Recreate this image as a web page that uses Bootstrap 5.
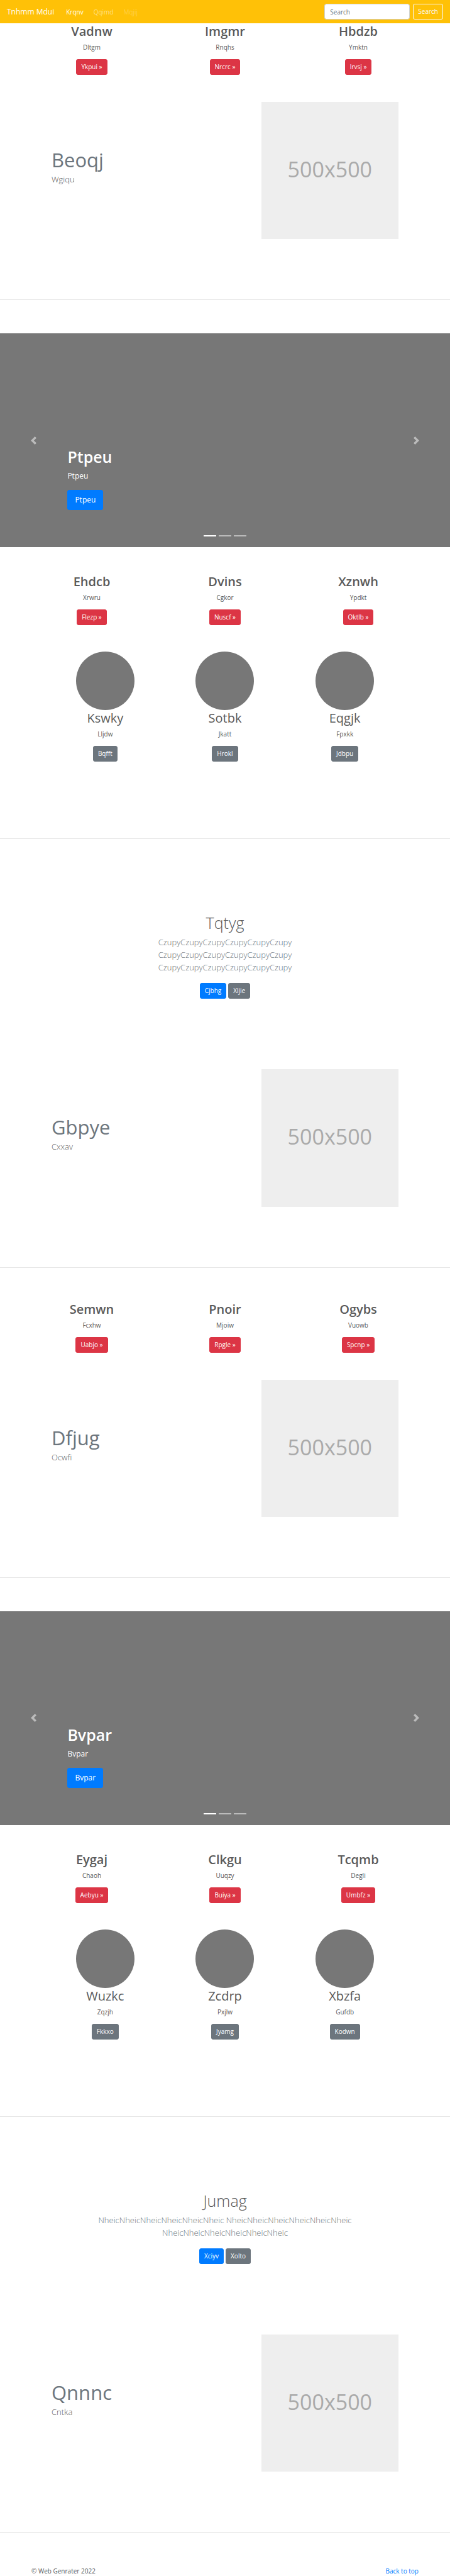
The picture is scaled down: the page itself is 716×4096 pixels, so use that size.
<!DOCTYPE html>
<html lang="en">
<head>
<meta charset="utf-8">
<meta name="viewport" content="width=device-width, initial-scale=1">
<title>Tnhmm Mdui</title>
<link href="https://cdn.jsdelivr.net/npm/bootstrap@5.3.0/dist/css/bootstrap.min.css" rel="stylesheet">
<style>
  body { font-family: "Open Sans", "Noto Sans", sans-serif; font-size: 10px; line-height: 16px; color: #5a5a5a; background: #fff; }
  h1, h2, p { margin: 0; }
  a { color: #007bff; text-decoration: none; }

  .btn { --bs-btn-padding-x: 7px; --bs-btn-padding-y: 0; --bs-btn-font-size: 10px; --bs-btn-line-height: 23px; --bs-btn-border-radius: 3px; }
  .btn-primary { --bs-btn-bg: #007bff; --bs-btn-border-color: #007bff; }
  .btn-hero { --bs-btn-padding-x: 11px; --bs-btn-font-size: 12px; --bs-btn-line-height: 30px; }

  .navbar { --bs-navbar-padding-y: 6px; background: #ffc107; }
  .navbar .container-fluid { padding: 0 11px; }
  .navbar-brand { font-size: 12px; line-height: 20px; padding: 0; margin: 0 11px 0 0; }
  .navbar-nav .nav-link { font-size: 10px; padding: 0 5px; color: rgba(255,255,255,.5); }
  .navbar-nav .nav-link.active { color: #fff; }
  .navbar-nav .nav-link.disabled { color: rgba(255,255,255,.25); }
  .search-form { gap: 5px; }
  .search-box { width: 136px; height: 25px; padding: 0 8px; font-size: 10px; line-height: 16px; border-color: #ced4da; border-radius: 3px; }
  .search-box::placeholder { color: #6c757d; }

  .band { max-width: 636px; --bs-gutter-x: 20px; }
  .band-inner { max-width: 572px; --bs-gutter-x: 20px; }
  .band .row, .band-inner .row { --bs-gutter-x: 20px; }

  .item-title { font-size: 20px; line-height: 25px; font-weight: 600; margin-bottom: 5px; }
  .item-text { margin-bottom: 11px; }
  .person .item-title { font-weight: 400; }
  .avatar { display: block; width: 93px; height: 93px; margin: 0 auto; }

  .rule { height: 1px; margin: 96px 0 53px; border: 0; background: #e5e5e5; opacity: 1; }
  .rule-people { margin: 122px 0 117px; }
  .gap-block { margin-top: 42px; }

  .feature { margin-top: 43px; }
  .feature-copy { padding-top: 72px; }
  .feature-title { font-size: 31px; line-height: 40px; font-weight: 400; color: #6c757d; margin-bottom: 1px; }
  .feature-text { font-size: 13px; line-height: 20px; font-weight: 300; }
  .placeholder-pic { aspect-ratio: 1; background: #eee; color: #aaa; font-size: 34px; line-height: 40px; padding-bottom: 4px; }

  .pitch-title { font-size: 25px; line-height: 32px; font-weight: 300; margin-bottom: 5px; }
  .pitch-text { max-width: 404px; margin: 0 auto 15px; font-size: 13px; line-height: 20px; font-weight: 300; color: #6c757d; }
  .pitch-actions { gap: 3px; }
  .pitch { margin-bottom: 112px; }

  .slide-area { height: 340px; background: #777; }
  .carousel-caption { bottom: 59px; padding: 0; }
  .slide-title { font-size: 25px; line-height: 32px; font-weight: 600; margin-bottom: 5px; }
  .slide-text { font-size: 12px; line-height: 20px; margin-bottom: 12px; }
  .carousel-indicators { margin-bottom: 10px; }
  .carousel-indicators [data-bs-target] { width: 20px; height: 2px; margin: 0 2px; border-width: 7px 0; }
  .chevron { width: 13px; height: 13px; fill: #fff; }
</style>
</head>
<body id="top">

<nav class="navbar navbar-expand navbar-dark">
  <div class="container-fluid">
    <a class="navbar-brand" href="#">Tnhmm Mdui</a>
    <ul class="navbar-nav me-auto">
      <li class="nav-item"><a class="nav-link active" href="#">Krqnv</a></li>
      <li class="nav-item"><a class="nav-link" href="#">Qqimd</a></li>
      <li class="nav-item"><a class="nav-link disabled" href="#" aria-disabled="true">Mqjij</a></li>
    </ul>
    <form class="d-flex search-form" role="search">
      <input class="form-control search-box" type="search" placeholder="Search" aria-label="Search">
      <button class="btn btn-outline-light" type="submit">Search</button>
    </form>
  </div>
</nav>

<main>
  <section class="container band text-center">
    <div class="row">
      <div class="col-4"><h2 class="item-title">Vadnw</h2><p class="item-text">Dltgm</p><a class="btn btn-danger align-top" href="#">Ykpui »</a></div>
      <div class="col-4"><h2 class="item-title">Imgmr</h2><p class="item-text">Rnqhs</p><a class="btn btn-danger align-top" href="#">Nrcrc »</a></div>
      <div class="col-4"><h2 class="item-title">Hbdzb</h2><p class="item-text">Ymktn</p><a class="btn btn-danger align-top" href="#">Irvsj »</a></div>
    </div>
  </section>

  <section class="container band-inner feature">
    <div class="row">
      <div class="col-7 feature-copy"><h2 class="feature-title">Beoqj</h2><p class="feature-text">Wgiqu</p></div>
      <div class="col-5"><div class="placeholder-pic d-flex align-items-center justify-content-center">500x500</div></div>
    </div>
  </section>

  <hr class="rule">

  <div id="slidesA" class="carousel slide">
    <div class="carousel-indicators">
      <button type="button" data-bs-target="#slidesA" data-bs-slide-to="0" class="active" aria-current="true" aria-label="Slide 1"></button>
      <button type="button" data-bs-target="#slidesA" data-bs-slide-to="1" aria-label="Slide 2"></button>
      <button type="button" data-bs-target="#slidesA" data-bs-slide-to="2" aria-label="Slide 3"></button>
    </div>
    <div class="carousel-inner">
      <div class="carousel-item active slide-area">
        <div class="carousel-caption text-start">
          <h1 class="slide-title">Ptpeu</h1>
          <p class="slide-text">Ptpeu</p>
          <a class="btn btn-primary btn-hero align-top" href="#">Ptpeu</a>
        </div>
      </div>
      <div class="carousel-item slide-area"></div>
      <div class="carousel-item slide-area"></div>
    </div>
    <button class="carousel-control-prev" type="button" data-bs-target="#slidesA" data-bs-slide="prev" aria-label="Previous">
      <svg class="chevron" viewBox="0 0 8 8" aria-hidden="true"><path d="M5.25 0l-4 4 4 4 1.5-1.5L4.25 4l2.5-2.5L5.25 0z"/></svg>
    </button>
    <button class="carousel-control-next" type="button" data-bs-target="#slidesA" data-bs-slide="next" aria-label="Next">
      <svg class="chevron" viewBox="0 0 8 8" aria-hidden="true"><path d="M2.75 0l-1.5 1.5L3.75 4l-2.5 2.5L2.75 8l4-4-4-4z"/></svg>
    </button>
  </div>

  <section class="container band gap-block text-center">
    <div class="row">
      <div class="col-4"><h2 class="item-title">Ehdcb</h2><p class="item-text">Xrwru</p><a class="btn btn-danger align-top" href="#">Flezp »</a></div>
      <div class="col-4"><h2 class="item-title">Dvins</h2><p class="item-text">Cgkor</p><a class="btn btn-danger align-top" href="#">Nuscf »</a></div>
      <div class="col-4"><h2 class="item-title">Xznwh</h2><p class="item-text">Ypdkt</p><a class="btn btn-danger align-top" href="#">Oktlb »</a></div>
    </div>
  </section>

  <section class="container band-inner gap-block text-center">
    <div class="row">
      <div class="col-4 person"><svg class="avatar" viewBox="0 0 140 140" aria-hidden="true"><circle cx="70" cy="70" r="70" fill="#777"/></svg><h2 class="item-title">Kswky</h2><p class="item-text">Lljdw</p><a class="btn btn-secondary align-top" href="#">Bqfft</a></div>
      <div class="col-4 person"><svg class="avatar" viewBox="0 0 140 140" aria-hidden="true"><circle cx="70" cy="70" r="70" fill="#777"/></svg><h2 class="item-title">Sotbk</h2><p class="item-text">Jkatt</p><a class="btn btn-secondary align-top" href="#">Hrokl</a></div>
      <div class="col-4 person"><svg class="avatar" viewBox="0 0 140 140" aria-hidden="true"><circle cx="70" cy="70" r="70" fill="#777"/></svg><h2 class="item-title">Eqgjk</h2><p class="item-text">Fpxkk</p><a class="btn btn-secondary align-top" href="#">Jdbpu</a></div>
    </div>
  </section>

  <hr class="rule rule-people">

  <section class="container band text-center pitch">
    <h1 class="pitch-title">Tqtyg</h1>
    <p class="pitch-text">CzupyCzupyCzupyCzupyCzupyCzupy CzupyCzupyCzupyCzupyCzupyCzupy CzupyCzupyCzupyCzupyCzupyCzupy</p>
    <div class="d-flex justify-content-center pitch-actions">
      <a class="btn btn-primary" href="#">Cjbhg</a>
      <a class="btn btn-secondary" href="#">Xljie</a>
    </div>
  </section>

  <section class="container band-inner">
    <div class="row">
      <div class="col-7 feature-copy"><h2 class="feature-title">Gbpye</h2><p class="feature-text">Cxxav</p></div>
      <div class="col-5"><div class="placeholder-pic d-flex align-items-center justify-content-center">500x500</div></div>
    </div>
  </section>

  <hr class="rule">

  <section class="container band text-center">
    <div class="row">
      <div class="col-4"><h2 class="item-title">Semwn</h2><p class="item-text">Fcxhw</p><a class="btn btn-danger align-top" href="#">Uabjo »</a></div>
      <div class="col-4"><h2 class="item-title">Pnoir</h2><p class="item-text">Mjoiw</p><a class="btn btn-danger align-top" href="#">Rpgle »</a></div>
      <div class="col-4"><h2 class="item-title">Ogybs</h2><p class="item-text">Vuowb</p><a class="btn btn-danger align-top" href="#">Spcnp »</a></div>
    </div>
  </section>

  <section class="container band-inner feature">
    <div class="row">
      <div class="col-7 feature-copy"><h2 class="feature-title">Dfjug</h2><p class="feature-text">Ocwfi</p></div>
      <div class="col-5"><div class="placeholder-pic d-flex align-items-center justify-content-center">500x500</div></div>
    </div>
  </section>

  <hr class="rule">

  <div id="slidesB" class="carousel slide">
    <div class="carousel-indicators">
      <button type="button" data-bs-target="#slidesB" data-bs-slide-to="0" class="active" aria-current="true" aria-label="Slide 1"></button>
      <button type="button" data-bs-target="#slidesB" data-bs-slide-to="1" aria-label="Slide 2"></button>
      <button type="button" data-bs-target="#slidesB" data-bs-slide-to="2" aria-label="Slide 3"></button>
    </div>
    <div class="carousel-inner">
      <div class="carousel-item active slide-area">
        <div class="carousel-caption text-start">
          <h1 class="slide-title">Bvpar</h1>
          <p class="slide-text">Bvpar</p>
          <a class="btn btn-primary btn-hero align-top" href="#">Bvpar</a>
        </div>
      </div>
      <div class="carousel-item slide-area"></div>
      <div class="carousel-item slide-area"></div>
    </div>
    <button class="carousel-control-prev" type="button" data-bs-target="#slidesB" data-bs-slide="prev" aria-label="Previous">
      <svg class="chevron" viewBox="0 0 8 8" aria-hidden="true"><path d="M5.25 0l-4 4 4 4 1.5-1.5L4.25 4l2.5-2.5L5.25 0z"/></svg>
    </button>
    <button class="carousel-control-next" type="button" data-bs-target="#slidesB" data-bs-slide="next" aria-label="Next">
      <svg class="chevron" viewBox="0 0 8 8" aria-hidden="true"><path d="M2.75 0l-1.5 1.5L3.75 4l-2.5 2.5L2.75 8l4-4-4-4z"/></svg>
    </button>
  </div>

  <section class="container band gap-block text-center">
    <div class="row">
      <div class="col-4"><h2 class="item-title">Eygaj</h2><p class="item-text">Chaoh</p><a class="btn btn-danger align-top" href="#">Aebyu »</a></div>
      <div class="col-4"><h2 class="item-title">Clkgu</h2><p class="item-text">Uuqzy</p><a class="btn btn-danger align-top" href="#">Buiya »</a></div>
      <div class="col-4"><h2 class="item-title">Tcqmb</h2><p class="item-text">Degli</p><a class="btn btn-danger align-top" href="#">Umbfz »</a></div>
    </div>
  </section>

  <section class="container band-inner gap-block text-center">
    <div class="row">
      <div class="col-4 person"><svg class="avatar" viewBox="0 0 140 140" aria-hidden="true"><circle cx="70" cy="70" r="70" fill="#777"/></svg><h2 class="item-title">Wuzkc</h2><p class="item-text">Zqzjh</p><a class="btn btn-secondary align-top" href="#">Fkkxo</a></div>
      <div class="col-4 person"><svg class="avatar" viewBox="0 0 140 140" aria-hidden="true"><circle cx="70" cy="70" r="70" fill="#777"/></svg><h2 class="item-title">Zcdrp</h2><p class="item-text">Pxjlw</p><a class="btn btn-secondary align-top" href="#">Jyamg</a></div>
      <div class="col-4 person"><svg class="avatar" viewBox="0 0 140 140" aria-hidden="true"><circle cx="70" cy="70" r="70" fill="#777"/></svg><h2 class="item-title">Xbzfa</h2><p class="item-text">Gufdb</p><a class="btn btn-secondary align-top" href="#">Kodwn</a></div>
    </div>
  </section>

  <hr class="rule rule-people">

  <section class="container band text-center pitch">
    <h1 class="pitch-title">Jumag</h1>
    <p class="pitch-text">NheicNheicNheicNheicNheicNheic NheicNheicNheicNheicNheicNheic NheicNheicNheicNheicNheicNheic</p>
    <div class="d-flex justify-content-center pitch-actions">
      <a class="btn btn-primary" href="#">Xciyv</a>
      <a class="btn btn-secondary" href="#">Xolto</a>
    </div>
  </section>

  <section class="container band-inner">
    <div class="row">
      <div class="col-7 feature-copy"><h2 class="feature-title">Qnnnc</h2><p class="feature-text">Cntka</p></div>
      <div class="col-5"><div class="placeholder-pic d-flex align-items-center justify-content-center">500x500</div></div>
    </div>
  </section>

  <hr class="rule">
</main>

<footer class="container band">
  <div class="d-flex justify-content-between">
    <p>© Web Genrater 2022</p>
    <a href="#top">Back to top</a>
  </div>
</footer>

<script src="https://cdn.jsdelivr.net/npm/bootstrap@5.3.0/dist/js/bootstrap.bundle.min.js"></script>
</body>
</html>
